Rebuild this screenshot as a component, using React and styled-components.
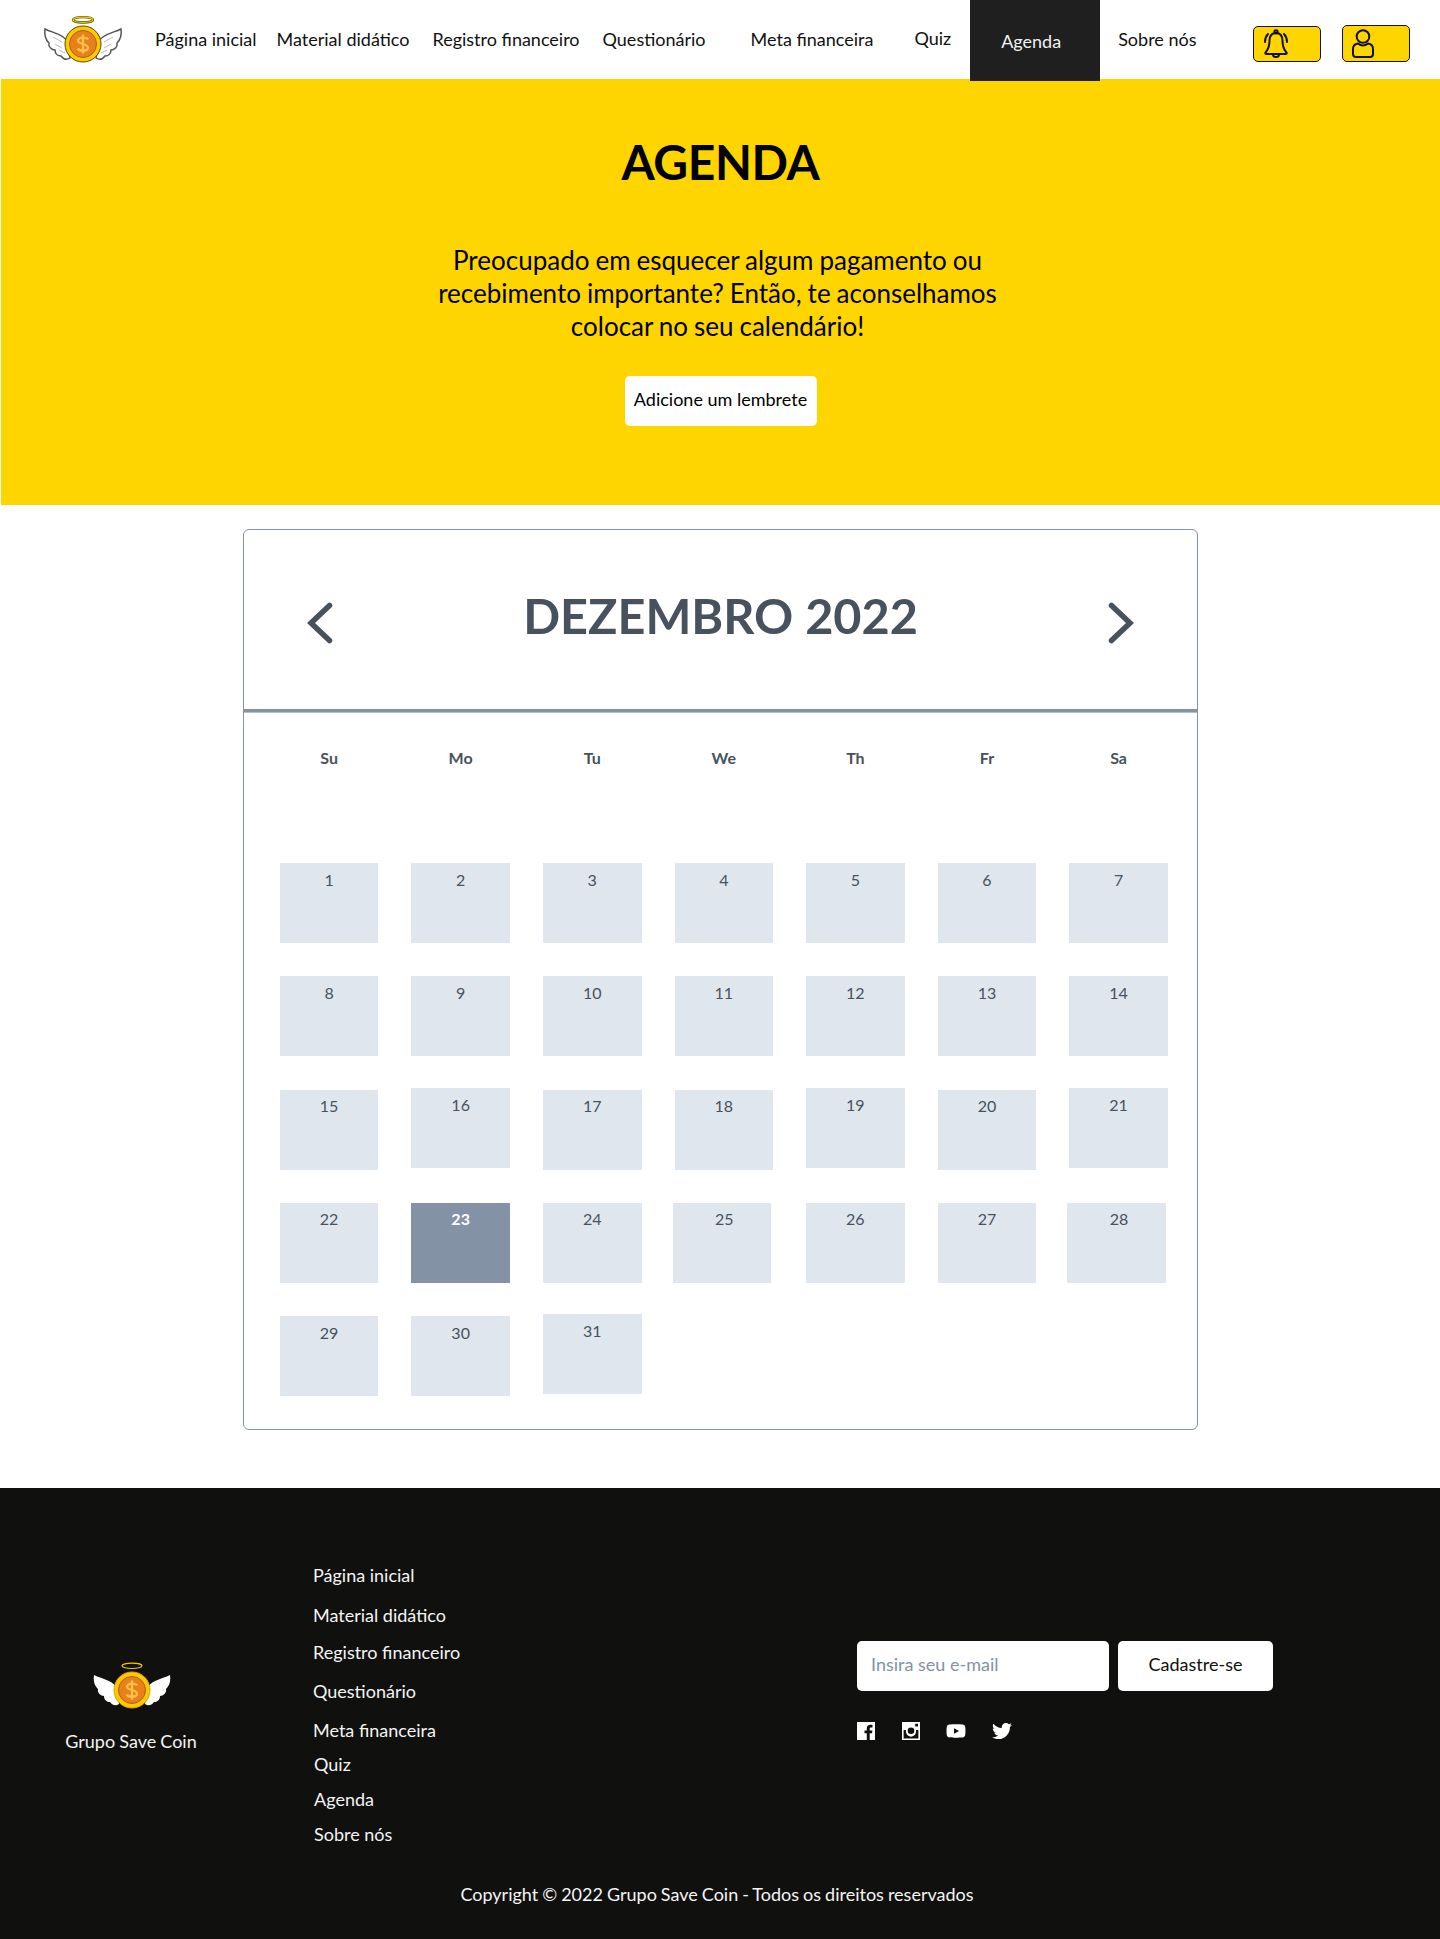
import React from 'react';
import styled, { createGlobalStyle } from 'styled-components';
import { FaTwitter, FaYoutube } from 'react-icons/fa';

const GlobalStyle = createGlobalStyle`
  html, body {
    margin: 0;
    padding: 0;
    background: #fff;
    font-family: 'Lato', 'Liberation Sans', sans-serif;
  }
  * { box-sizing: border-box; }
`;

// Header
const Header = styled.header`
  display: flex;
  align-items: center;
  height: 79px;
  padding-left: 43px;
  background: #fff;
`;

const NavLink = styled.a`
  margin-left: ${p => p.$left}px;
  transform: translateY(${p => p.$lift || -1}px);
  font-size: 18px;
  line-height: 22px;
  color: #111;
  white-space: nowrap;
  text-decoration: none;
`;

const ActiveTab = styled.a`
  position: relative;
  z-index: 1;
  align-self: flex-start;
  display: flex;
  align-items: center;
  justify-content: center;
  width: 130px;
  height: 81px;
  margin-left: ${p => p.$left}px;
  padding: 0 8px 0 0;
  background: #1f1f1f;
  color: #f2f2f2;
  font-size: 18px;
  text-decoration: none;
`;

const IconButton = styled.button`
  align-self: flex-start;
  display: flex;
  align-items: center;
  width: 68px;
  height: ${p => p.$height}px;
  margin: ${p => p.$top}px 0 0 ${p => p.$left}px;
  padding: 0 0 0 8px;
  background: #ffd500;
  border: 1px solid #111;
  border-radius: 5px;
`;

// Hero
const Hero = styled.section`
  margin-left: 1px;
  height: 426px;
  padding-top: 54px;
  background: #ffd500;
  text-align: center;
  color: #000;
`;

const HeroTitle = styled.h1`
  margin: 0;
  font-size: 48px;
  line-height: 58px;
  font-weight: 700;
  letter-spacing: -0.4px;
`;

const HeroText = styled.p`
  width: 600px;
  margin: 53px auto 33px;
  padding-right: 6px;
  font-size: 26px;
  line-height: 33px;
  word-spacing: -0.7px;
`;

const HeroButton = styled.button`
  width: 192px;
  height: 50px;
  padding: 0 0 5px;
  border: none;
  border-radius: 5px;
  background: #fff;
  color: #000;
  font-family: inherit;
  font-size: 18px;
`;

// Calendar
const Calendar = styled.section`
  width: 955px;
  margin: 24px 0 58px 243px;
  padding-bottom: 33px;
  border: 1px solid #8492a6;
  border-radius: 6px;
`;

const CalendarHead = styled.div`
  display: flex;
  align-items: center;
  justify-content: space-between;
  height: 182px;
  padding: 0 63px;
  border-bottom: 3px solid #8492a6;
  box-shadow: 0 1px 0 #b4bfcc;
`;

const Month = styled.h2`
  margin: 0 0 10px;
  font-size: 48.6px;
  line-height: 60px;
  font-weight: 700;
  color: #47525e;
`;

const WeekGrid = styled.div`
  display: grid;
  grid-template-columns: repeat(7, 1fr);
  column-gap: 33px;
  padding: 35px 29.2px 0 35.8px;
`;

const WeekDay = styled.div`
  text-align: center;
  font-size: 16px;
  line-height: 22px;
  font-weight: 700;
  color: #47525e;
`;

const DayGrid = styled.div`
  display: grid;
  grid-template-columns: repeat(7, 1fr);
  gap: 33.33px 33px;
  margin-top: 94px;
  padding: 0 29.2px 0 35.8px;
`;

const Day = styled.div`
  height: 80px;
  padding-top: ${p => (p.$dy ? 7 : 6.5)}px;
  padding-left: ${p => (p.$dx ? 5 : 0)}px;
  transform: translate(${p => p.$dx || 0}px, ${p => p.$dy || 0}px);
  background: ${p => (p.$today ? '#8492a6' : '#e0e6ee')};
  color: ${p => (p.$today ? '#fff' : '#47525e')};
  font-weight: ${p => (p.$today ? 700 : 400)};
  font-size: 16px;
  line-height: 20px;
  text-align: center;
`;

// Footer
const Footer = styled.footer`
  height: 451px;
  padding-top: 76px;
  background: #10100e;
  color: #f4f4f4;
`;

const FooterRow = styled.div`
  display: flex;
  align-items: flex-start;
  height: 281px;
`;

const Brand = styled.div`
  display: flex;
  flex-direction: column;
  align-items: center;
  width: 260px;
  margin: 98px 0 0 1px;
`;

const BrandLogo = styled.div`
  display: flex;
  margin-left: 2px;
`;

const BrandName = styled.span`
  margin-top: 20px;
  font-size: 18px;
  line-height: 22px;
  word-spacing: -0.5px;
`;

const FooterLinks = styled.ul`
  width: 544px;
  margin: 0 0 0 52px;
  padding: 0;
  list-style: none;
`;

const FooterLink = styled.li`
  margin: ${p => p.$gap}px 0 0 ${p => p.$indent || 0}px;
  font-size: 18px;
  line-height: 22px;
`;

const SignUp = styled.div`
  margin-top: 77px;
`;

const Form = styled.form`
  display: flex;
  gap: 9px;
`;

const EmailInput = styled.input`
  width: 252px;
  height: 50px;
  padding: 0 14px 5px;
  border: none;
  border-radius: 5px;
  background: #fff;
  font-family: inherit;
  font-size: 18px;
  &::placeholder { color: #8492a6; opacity: 1; }
`;

const SignUpButton = styled.button`
  width: 155px;
  height: 50px;
  padding: 0 0 5px;
  border: none;
  border-radius: 5px;
  background: #fff;
  color: #10100e;
  font-family: inherit;
  font-size: 18px;
`;

const Socials = styled.div`
  display: flex;
  align-items: center;
  gap: 26px;
  margin-top: 30px;
  color: #fff;
  & > :first-child { margin-right: 1px; }
`;

const Copyright = styled.p`
  margin: 38px 0 0;
  padding-right: 6px;
  text-align: center;
  font-size: 18px;
  line-height: 22px;
  word-spacing: -0.6px;
`;

const ChevronIcon = styled.svg`
  margin-top: 7px;
`;

const Chevron = ({ flip }) => (
  <ChevronIcon width="26" height="42" viewBox="0 0 26 42">
    <path
      d={flip ? 'M3.5 3.5 L22 21 L3.5 38.5' : 'M22.5 3.5 L4 21 L22.5 38.5'}
      fill="none"
      stroke="#47525e"
      strokeWidth="5.5"
      strokeLinecap="round"
      strokeLinejoin="miter"
    />
  </ChevronIcon>
);

const LogoMark = styled.svg`
  overflow: visible;
`;

const Logo = ({ outlined }) => {
  const wing = 'M55 25 C59 18 69 17 77 13 C78 20 76 24 73 27 C74 31 70 34 67 34 C67 38 64 40 61 40 C58 44 55 44 52 42 Z';
  const edge = outlined ? '#555' : 'none';
  return (
    <LogoMark width="80" height="48" viewBox="-1 0 80 48">
      <path d={wing} fill="#fff" stroke={edge} strokeWidth="1.5" />
      <path d={wing} fill="#fff" stroke={edge} strokeWidth="1.5" transform="matrix(-1 0 0 1 78 0)" />
      {outlined && (
        <path d="M60 26 L69 21 M60 32 L67 28 M57 37 L63 34 M18 26 L9 21 M18 32 L11 28 M21 37 L15 34" stroke="#bbb" strokeWidth="1" />
      )}
      <ellipse cx="39" cy="3.8" rx="10" ry="2.7" fill="none" stroke={outlined ? '#5a5200' : '#f2c500'} strokeWidth={outlined ? 2.4 : 1.2} />
      {outlined && <ellipse cx="39" cy="3.8" rx="10" ry="2.7" fill="none" stroke="#f2c500" strokeWidth="1.2" />}
      <circle cx="39" cy="28" r="18" fill="#ffc800" stroke={outlined ? '#5a4a00' : '#d9a400'} strokeWidth="1" />
      <circle cx="39" cy="28" r="13.5" fill="#e8801c" stroke="#a8621a" strokeWidth="1" />
      <path
        d="M44 23.5 C43 21 35 20.5 34 24.5 C33.5 29 44.5 27 44 32 C43.5 35.5 35 35.5 33.8 32.5 M39 18.5 V37.5"
        fill="none"
        stroke="#ffc24a"
        strokeWidth="2.3"
      />
    </LogoMark>
  );
};

const BellIcon = () => (
  <svg width="28" height="30" viewBox="0 0 28 30" fill="none" stroke="#111" strokeWidth="2" strokeLinecap="round" strokeLinejoin="round">
    <path d="M14 4 C9 4 7.5 8 7.5 12 C7.5 17 6.5 20 3.5 23.5 C3 24.5 3.5 25 4.5 25 H23.5 C24.5 25 25 24.5 24.5 23.5 C21.5 20 20.5 17 20.5 12 C20.5 8 19 4 14 4 Z" />
    <circle cx="14" cy="2.8" r="1.6" />
    <path d="M11 25.2 C11 29 17 29 17 25.2" />
    <path d="M6 5 C4 7 3 10 3 13" />
    <path d="M22 5 C24 7 25 10 25 13" />
  </svg>
);

const UserIcon = () => (
  <svg width="24" height="29" viewBox="0 0 24 29" fill="none" stroke="#111" strokeWidth="2" strokeLinejoin="round">
    <circle cx="12" cy="7.5" r="6.3" />
    <path d="M7 14.5 C4 15 2 17 2 20 V25 C2 27 3 28 5 28 H19 C21 28 22 27 22 25 V20 C22 17 20 15 17 14.5 C14 17 10 17 7 14.5 Z" />
  </svg>
);

const FacebookIcon = () => (
  <svg width="18" height="18" viewBox="0 0 18 18">
    <path
      fill="#fff"
      fillRule="evenodd"
      d="M0 0 H18 V18 H12.7 V11.2 H15 L15.4 8.4 H12.7 V6.8 C12.7 6 13 5.4 14.1 5.4 H15.5 V3 C15 2.9 14.2 2.8 13.3 2.8 C11.2 2.8 9.8 4.1 9.8 6.4 V8.4 H7.5 V11.2 H9.8 V18 H0 Z"
    />
  </svg>
);

const InstagramIcon = () => (
  <svg width="18" height="18" viewBox="0 0 18 18">
    <path
      fill="#fff"
      fillRule="evenodd"
      d="M0 0 H18 V18 H0 Z M1.6 8 V16.4 H16.4 V8 H14 A5.2 5.2 0 1 1 4 8 Z M9 5.4 A3.3 3.3 0 1 0 9 12 A3.3 3.3 0 1 0 9 5.4 Z M13.2 1.8 V4.6 H16 V1.8 Z"
    />
  </svg>
);

const menu = [
  { label: 'Página inicial', left: 32 },
  { label: 'Material didático', left: 20 },
  { label: 'Registro financeiro', left: 23 },
  { label: 'Questionário', left: 23 },
  { label: 'Meta financeira', left: 45 },
  { label: 'Quiz', left: 41, lift: -2 },
];

const footerMenu = [
  { label: 'Página inicial', gap: 0 },
  { label: 'Material didático', gap: 18 },
  { label: 'Registro financeiro', gap: 15 },
  { label: 'Questionário', gap: 17 },
  { label: 'Meta financeira', gap: 17 },
  { label: 'Quiz', gap: 12, indent: 1 },
  { label: 'Agenda', gap: 13, indent: 1 },
  { label: 'Sobre nós', gap: 13, indent: 1 },
];

const weekDays = ['Su', 'Mo', 'Tu', 'We', 'Th', 'Fr', 'Sa'];

// some of the days sit a little off the grid in the original
const offsets = {
  16: { dy: -2 },
  19: { dy: -2 },
  21: { dy: -2 },
  25: { dx: -2 },
  28: { dx: -2 },
  31: { dy: -2 },
};

const days = Array.from({ length: 31 }, (_, i) => i + 1);

const App = () => (
  <>
    <GlobalStyle />
    <Header>
      <Logo outlined />
      {menu.map(item => (
        <NavLink key={item.label} $left={item.left} $lift={item.lift}>{item.label}</NavLink>
      ))}
      <ActiveTab $left={19}>Agenda</ActiveTab>
      <NavLink $left={18}>Sobre nós</NavLink>
      <IconButton $left={56} $top={26} $height={36}><BellIcon /></IconButton>
      <IconButton $left={21} $top={25} $height={37}><UserIcon /></IconButton>
    </Header>

    <Hero>
      <HeroTitle>AGENDA</HeroTitle>
      <HeroText>
        Preocupado em esquecer algum pagamento ou recebimento importante? Então, te aconselhamos colocar no seu calendário!
      </HeroText>
      <HeroButton>Adicione um lembrete</HeroButton>
    </Hero>

    <Calendar>
      <CalendarHead>
        <Chevron />
        <Month>DEZEMBRO 2022</Month>
        <Chevron flip />
      </CalendarHead>
      <WeekGrid>
        {weekDays.map(d => <WeekDay key={d}>{d}</WeekDay>)}
      </WeekGrid>
      <DayGrid>
        {days.map(d => (
          <Day key={d} $today={d === 23} $dx={offsets[d]?.dx} $dy={offsets[d]?.dy}>{d}</Day>
        ))}
      </DayGrid>
    </Calendar>

    <Footer>
      <FooterRow>
        <Brand>
          <BrandLogo><Logo /></BrandLogo>
          <BrandName>Grupo Save Coin</BrandName>
        </Brand>
        <FooterLinks>
          {footerMenu.map(item => (
            <FooterLink key={item.label} $gap={item.gap} $indent={item.indent}>{item.label}</FooterLink>
          ))}
        </FooterLinks>
        <SignUp>
          <Form>
            <EmailInput placeholder="Insira seu e-mail" />
            <SignUpButton type="button">Cadastre-se</SignUpButton>
          </Form>
          <Socials>
            <FacebookIcon />
            <InstagramIcon />
            <FaYoutube size={20} />
            <FaTwitter size={20} />
          </Socials>
        </SignUp>
      </FooterRow>
      <Copyright>Copyright © 2022 Grupo Save Coin - Todos os direitos reservados</Copyright>
    </Footer>
  </>
);

export default App;
